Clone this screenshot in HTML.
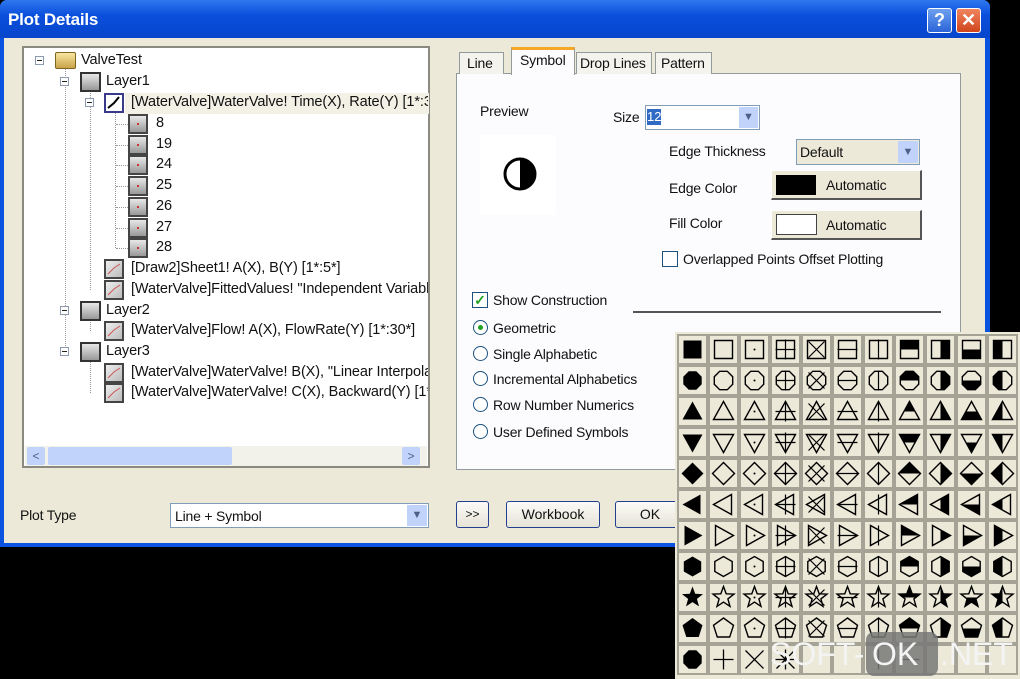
<!DOCTYPE html>
<html><head><meta charset="utf-8">
<style>
*{margin:0;padding:0;box-sizing:border-box}
body{width:1020px;height:679px;background:#000;position:relative;overflow:hidden;font-family:"Liberation Sans",sans-serif;font-size:13px;color:#111}
.a{position:absolute}
.t{position:absolute;white-space:nowrap;font-size:14px;letter-spacing:-0.2px}
.btn{position:absolute;background:linear-gradient(#fbfbf8,#e6e3d6);border:1px solid #233f8f;border-radius:3px;text-align:center;font-size:14px}
.ti{position:absolute;width:20px;height:20px;background:linear-gradient(#e8e8e8,#999);border:2px solid #333}
.pm{position:absolute;width:9px;height:9px;border:1px solid #8c9ab0;background:#fff}
.pm:after{content:"";position:absolute;left:1px;top:3px;width:5px;height:1px;background:#222}
.radio{position:absolute;width:15px;height:15px;border-radius:50%;border:1px solid #1c5180;background:#fff}
</style></head><body>
<div class="a" style="left:0;top:0;width:990px;height:547px;background:#0a52e0;border-radius:7px 7px 0 0"></div>
<div class="a" style="left:0;top:0;width:990px;height:38px;background:linear-gradient(#2f78f0,#0a4fdc 40%,#0846cc);border-radius:7px 7px 0 0"></div>
<div class="t" style="left:8px;top:10px;color:#fff;font-weight:bold;font-size:17px;letter-spacing:-0.2px">Plot Details</div>
<div class="a" style="left:927px;top:8px;width:25px;height:25px;background:linear-gradient(#6ea0f0,#2a64d8);border:1px solid #fff;border-radius:3px;color:#fff;font-weight:bold;font-size:18px;text-align:center;line-height:23px">?</div>
<div class="a" style="left:956px;top:8px;width:25px;height:25px;background:linear-gradient(#f0855e,#d0451c);border:1px solid #fff;border-radius:3px;color:#fff;font-weight:bold;font-size:18px;text-align:center;line-height:23px">✕</div>
<div class="a" style="left:4px;top:38px;width:981px;height:505px;background:#ece9d8"></div>
<div class="a" style="left:22px;top:46px;width:408px;height:422px;background:#fff;border:2px solid #8a8a80"></div>
<div class="a" style="left:25px;top:446px;width:402px;height:20px;background:#f2f1ea"></div>
<div class="a" style="left:27px;top:447px;width:18px;height:18px;background:#c1d3fb;border-radius:2px;color:#4d6185;font-size:12px;text-align:center;line-height:18px">&lt;</div>
<div class="a" style="left:48px;top:447px;width:184px;height:18px;background:#c1d3fb;border-radius:2px"></div>
<div class="a" style="left:402px;top:447px;width:18px;height:18px;background:#c1d3fb;border-radius:2px;color:#4d6185;font-size:12px;text-align:center;line-height:18px">&gt;</div>
<div class="a" style="left:65px;top:66px;height:286px;border-left:1px dotted #999"></div>
<div class="a" style="left:90px;top:88px;height:202px;border-left:1px dotted #999"></div>
<div class="a" style="left:115px;top:110px;height:138px;border-left:1px dotted #999"></div>
<div class="a" style="left:90px;top:316px;height:15px;border-left:1px dotted #999"></div>
<div class="a" style="left:90px;top:357px;height:36px;border-left:1px dotted #999"></div>
<div class="a" style="left:125px;top:93px;width:304px;height:21px;background:#f3f1e6"></div>
<div id="tree"></div>
<div class="a" style="left:456px;top:73px;width:505px;height:397px;background:#fcfcfe;border:1px solid #919b9c"></div>
<div class="a" style="left:459px;top:52px;width:45px;height:22px;background:#f4f3ee;border:1px solid #919b9c;border-bottom:none"></div>
<div class="t" style="left:467px;top:55px">Line</div>
<div class="a" style="left:576px;top:52px;width:76px;height:22px;background:#f4f3ee;border:1px solid #919b9c;border-bottom:none"></div>
<div class="t" style="left:580px;top:55px">Drop Lines</div>
<div class="a" style="left:655px;top:52px;width:57px;height:22px;background:#f4f3ee;border:1px solid #919b9c;border-bottom:none"></div>
<div class="t" style="left:661px;top:55px">Pattern</div>
<div class="a" style="left:511px;top:47px;width:64px;height:28px;background:#fcfcfe;border:1px solid #919b9c;border-top:3px solid #f4a826;border-bottom:none"></div>
<div class="t" style="left:520px;top:52px">Symbol</div>
<div class="t" style="left:480px;top:103px">Preview</div>
<div class="a" style="left:480px;top:135px;width:76px;height:80px;background:#fff"></div>
<svg class="a" style="left:502px;top:156px" width="36" height="36"><circle cx="18" cy="18" r="15" fill="#fff" stroke="#000" stroke-width="3"/><path d="M18 3 A15 15 0 0 1 18 33Z" fill="#000"/></svg>
<div class="t" style="left:613px;top:109px">Size</div>
<div class="a" style="left:645px;top:105px;width:115px;height:25px;background:#fff;border:1px solid #7f9db9"></div>
<div class="a" style="left:647px;top:109px;width:14px;height:16px;background:#316ac5;color:#fff;font-size:13px;line-height:16px">12</div>
<div class="a" style="left:739px;top:107px;width:19px;height:21px;background:#c1d3fb;color:#4d6185;font-size:11px;text-align:center;line-height:21px">▼</div>
<div class="t" style="left:669px;top:143px">Edge Thickness</div>
<div class="a" style="left:796px;top:139px;width:124px;height:26px;background:#ece9d8;border:1px solid #7f9db9"></div>
<div class="t" style="left:800px;top:144px">Default</div>
<div class="a" style="left:898px;top:141px;width:20px;height:22px;background:#c1d3fb;color:#4d6185;font-size:11px;text-align:center;line-height:22px">▼</div>
<div class="t" style="left:669px;top:180px">Edge Color</div>
<div class="a" style="left:771px;top:170px;width:151px;height:30px;background:#ece9d8;border:1px solid #fff;border-right:2px solid #555;border-bottom:2px solid #555"></div>
<div class="a" style="left:776px;top:175px;width:40px;height:20px;background:#000"></div>
<div class="t" style="left:826px;top:177px">Automatic</div>
<div class="t" style="left:669px;top:215px">Fill Color</div>
<div class="a" style="left:771px;top:210px;width:151px;height:30px;background:#ece9d8;border:1px solid #fff;border-right:2px solid #555;border-bottom:2px solid #555"></div>
<div class="a" style="left:776px;top:214px;width:41px;height:21px;background:#fff;border:1px solid #444"></div>
<div class="t" style="left:826px;top:217px">Automatic</div>
<div class="a" style="left:662px;top:251px;width:16px;height:16px;background:#fff;border:1px solid #1c5180"></div>
<div class="t" style="left:683px;top:251px">Overlapped Points Offset Plotting</div>
<div class="a" style="left:472px;top:292px;width:16px;height:16px;background:#fff;border:1px solid #1c5180;color:#21a121;font-size:14px;line-height:14px;text-align:center;font-weight:bold">✓</div>
<div class="t" style="left:493px;top:292px">Show Construction</div>
<div class="a" style="left:633px;top:311px;width:308px;height:2px;background:#555"></div>
<div class="radio" style="left:473px;top:320px"></div><div class="a" style="left:478px;top:325px;width:5px;height:5px;border-radius:50%;background:#21a121"></div>
<div class="t" style="left:493px;top:320px">Geometric</div>
<div class="radio" style="left:473px;top:346px"></div><div class="t" style="left:493px;top:346px">Single Alphabetic</div>
<div class="radio" style="left:473px;top:371px"></div><div class="t" style="left:493px;top:371px">Incremental Alphabetics</div>
<div class="radio" style="left:473px;top:397px"></div><div class="t" style="left:493px;top:397px">Row Number Numerics</div>
<div class="radio" style="left:473px;top:424px"></div><div class="t" style="left:493px;top:424px">User Defined Symbols</div>
<div class="t" style="left:20px;top:507px">Plot Type</div>
<div class="a" style="left:170px;top:503px;width:259px;height:25px;background:#fff;border:1px solid #7f9db9"></div>
<div class="t" style="left:175px;top:508px">Line + Symbol</div>
<div class="a" style="left:407px;top:505px;width:20px;height:21px;background:#c1d3fb;color:#4d6185;font-size:11px;text-align:center;line-height:21px">▼</div>
<div class="btn" style="left:456px;top:501px;width:33px;height:27px;line-height:25px;font-size:12px">&gt;&gt;</div>
<div class="btn" style="left:506px;top:501px;width:94px;height:27px;line-height:25px">Workbook</div>
<div class="btn" style="left:615px;top:501px;width:70px;height:27px;line-height:25px">OK</div>
<div class="a" style="left:675px;top:332px;width:345px;height:347px;background:#ece9d8"></div>
<svg id="grid" class="a" style="left:677px;top:334px" width="343" height="345"></svg>
<div class="a" style="left:866px;top:632px;width:72px;height:44px;background:rgba(120,120,120,0.85);border-radius:8px"></div>
<div class="t" style="left:770px;top:636px;font-size:32px;color:#f4f4f4;letter-spacing:0">SOFT-</div>
<div class="t" style="left:872px;top:636px;font-size:32px;color:#f4f4f4;letter-spacing:0">OK</div>
<div class="t" style="left:940px;top:636px;font-size:32px;color:#f4f4f4;letter-spacing:0">.NET</div>
<script>
var tr=document.getElementById('tree'),h='';
function row(pm,ix,tx,y,txt,kind){
 if(pm!==null)h+='<div class="pm" style="left:'+(pm-5)+'px;top:'+(y-5)+'px"></div>';
 if(kind=='f')h+='<div class="a" style="left:'+ix+'px;top:'+(y-9)+'px;width:21px;height:17px;background:linear-gradient(#f8e6a0,#c9a448);border:1px solid #806520;border-radius:2px"></div>';
 else if(kind=='l')h+='<div class="ti" style="left:'+ix+'px;top:'+(y-10)+'px;width:21px"></div>';
 else if(kind=='p')h+='<div class="ti" style="left:'+ix+'px;top:'+(y-10)+'px;border-color:#444"><div class="a" style="left:7px;top:7px;width:2px;height:2px;background:#c33"></div></div>';
 else if(kind=='s')h+='<div class="ti" style="left:'+ix+'px;top:'+(y-10)+'px;border-color:#444;background:linear-gradient(135deg,#eee,#bbb)"><svg class="a" width="16" height="16"><path d="M2 13 L8 7 L14 3" stroke="#c55" fill="none"/></svg></div>';
 else if(kind=='g')h+='<div class="ti" style="left:'+ix+'px;top:'+(y-10)+'px;background:#fff;border-color:#3a3a8a"><svg class="a" width="16" height="16"><path d="M2 13 L8 8 L13 2" stroke="#000" stroke-width="2" fill="none"/></svg></div>';
 h+='<div class="t" style="left:'+tx+'px;top:'+(y-9)+'px;font-size:14.5px;letter-spacing:-0.1px;max-width:'+(428-tx)+'px;overflow:hidden">'+txt+'</div>';
}
row(40,55,81,61,'ValveTest','f');
row(65,80,106,82,'Layer1','l');
row(90,104,131,103,'[WaterValve]WaterValve! Time(X), Rate(Y) [1*:30*]','g');
['8','19','24','25','26','27','28'].forEach(function(t,i){h+='<div class="a" style="left:116px;top:'+(124+i*20.7)+'px;width:12px;border-top:1px dotted #999"></div>';row(null,128,156,124+i*20.7,t,'p');});
row(null,104,131,269,'[Draw2]Sheet1! A(X), B(Y) [1*:5*]','s');
row(null,104,131,290,'[WaterValve]FittedValues! "Independent Variable"','s');
row(65,80,106,311,'Layer2','l');
row(null,104,131,331,'[WaterValve]Flow! A(X), FlowRate(Y) [1*:30*]','s');
row(65,80,106,352,'Layer3','l');
row(null,104,131,373,'[WaterValve]WaterValve! B(X), "Linear Interpolation"','s');
row(null,104,131,393,'[WaterValve]WaterValve! C(X), Backward(Y) [1*:30*]','s');
tr.innerHTML=h;
function poly(n,r,rot){var p=[];for(var i=0;i<n;i++){var a=rot+i*2*Math.PI/n;p.push((r*Math.cos(a)).toFixed(1)+','+(r*Math.sin(a)).toFixed(1));}return p.join(' ');}
function star(r){var p=[];for(var i=0;i<10;i++){var a=-Math.PI/2+i*Math.PI/5,rr=i%2?r*0.42:r;p.push((rr*Math.cos(a)).toFixed(1)+','+(rr*Math.sin(a)).toFixed(1));}return p.join(' ');}
var shapes=[
 '-9,-9 9,-9 9,9 -9,9',
 poly(8,10,Math.PI/8),
 '0,-10 10,8 -10,8',
 '0,10 10,-8 -10,-8',
 '0,-11 11,0 0,11 -11,0',
 '-10,0 8,-10 8,10',
 '10,0 -8,-10 -8,10',
 poly(6,10,Math.PI/2),
 star(11),
 poly(5,10.5,-Math.PI/2)
];
var g='<defs>';
var clips=[[-20,-20,40,20],[0,-20,20,40],[-20,0,40,20],[-20,-20,20,40]];
clips.forEach(function(c,i){g+='<clipPath id="c'+i+'"><rect x="'+c[0]+'" y="'+c[1]+'" width="'+c[2]+'" height="'+c[3]+'"/></clipPath>';});
g+='</defs>';
for(var r=0;r<11;r++)for(var c=0;c<11;c++){
 var x=c*31,y=r*31;
 g+='<rect x="'+(x+1)+'" y="'+(y+1)+'" width="29" height="29" fill="#ece9d8" stroke="#a5a396" stroke-width="2"/>';
 var tx='transform="translate('+(x+15.5)+','+(y+15.5)+')"';
 if(r==10){
  if(c==0)g+='<g '+tx+'><polygon points="'+poly(8,10,Math.PI/8)+'" fill="#000"/></g>';
  else if(c==1)g+='<g '+tx+' stroke="#000" stroke-width="1.3"><path d="M0 -10V10M-10 0H10"/></g>';
  else if(c==2)g+='<g '+tx+' stroke="#000" stroke-width="1.3"><path d="M-9 -9L9 9M9 -9L-9 9"/></g>';
  else if(c==3)g+='<g '+tx+' stroke="#000" stroke-width="1.3"><path d="M-9 -9L9 9M9 -9L-9 9M0 -10V10M-10 0H10"/></g>';
  else if(c==6)g+='<g '+tx+' stroke="#000" stroke-width="1.3"><path d="M0 -10V10"/></g>';
  else if(c==7)g+='<g '+tx+' stroke="#000" stroke-width="1.3"><path d="M-10 0H10"/></g>';
  continue;
 }
 var s=shapes[r];
 g+='<g '+tx+'>';
 if(c==0)g+='<polygon points="'+s+'" fill="#000"/>';
 else{
  g+='<polygon points="'+s+'" fill="none" stroke="#000" stroke-width="1.4"/>';
  if(c>=7)g+='<polygon points="'+s+'" fill="#000" clip-path="url(#c'+(c-7)+')"/>';
  if(c==2)g+='<circle r="1" fill="#000"/>';
  if(c==3)g+='<path d="M0 -10V10M-10 0H10" stroke="#000" stroke-width="1.2"/>';
  if(c==4)g+='<path d="M-8 -8L8 8M8 -8L-8 8" stroke="#000" stroke-width="1.2"/>';
  if(c==5)g+='<path d="M-10 0H10" stroke="#000" stroke-width="1.2"/>';
  if(c==6)g+='<path d="M0 -10V10" stroke="#000" stroke-width="1.2"/>';
 }
 g+='</g>';
}
document.getElementById('grid').innerHTML=g;
</script>
</body></html>
